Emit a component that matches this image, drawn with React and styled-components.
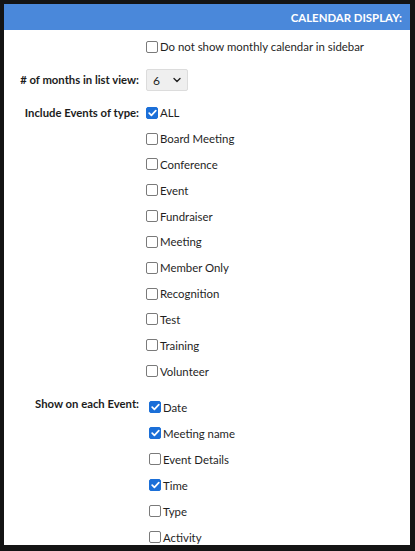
import React, { useState } from "react";
import styled, { createGlobalStyle } from "styled-components";

const GlobalStyle = createGlobalStyle`
  html, body {
    margin: 0;
    padding: 0;
    background: #ffffff;
  }
  body {
    font-family: Lato, "Open Sans", sans-serif;
    color: #222;
  }
`;

const Frame = styled.div`
  box-sizing: border-box;
  width: 415px;
  height: 551px;
  border-style: solid;
  border-color: #141414;
  border-width: 4px 5px 6px 4px;
  overflow: hidden;
  background: #fff;
`;

const Header = styled.header`
  height: 26px;
  background: #4a88da;
  color: #fff;
  display: flex;
  align-items: center;
  justify-content: flex-end;
  padding-right: 8px;
  font-size: 11.4px;
  font-weight: 700;
  text-transform: uppercase;
`;

const Form = styled.form`
  display: flex;
  flex-direction: column;
  gap: 9px;
  padding-top: 4px;
`;

const Row = styled.div`
  display: grid;
  grid-template-columns: 135px 1fr;
  column-gap: 7px;
  margin-top: ${(p) => p.$push || "0"};
  align-items: ${(p) => (p.$center ? "center" : "start")};
`;

const RowLabel = styled.label`
  text-align: right;
  font-size: 11.3px;
  font-weight: 700;
  line-height: ${(p) => p.$line || "26px"};
  color: #1c1c1c;
`;

const OptionList = styled.div`
  display: flex;
  flex-direction: column;
  padding-left: ${(p) => (p.$indent ? "3px" : "0")};
`;

const Option = styled.label`
  display: flex;
  align-items: center;
  height: ${(p) => p.$height || "25.8px"};
  font-size: 11.4px;
  color: #1f1f1f;
  cursor: pointer;
`;

const HiddenInput = styled.input`
  position: absolute;
  opacity: 0;
  width: 0;
  height: 0;
  margin: 0;
`;

const Box = styled.span`
  box-sizing: border-box;
  width: 12px;
  height: 12px;
  margin-right: 2px;
  border-radius: 2px;
  border: 1px solid ${(p) => (p.$checked ? "#1b6fd8" : "#7a7a7a")};
  background: ${(p) => (p.$checked ? "#1b6fd8" : "#fff")};
  display: flex;
  align-items: center;
  justify-content: center;
  flex-shrink: 0;
`;

const SelectWrap = styled.div`
  position: relative;
  width: 42px;
  height: 22px;
`;

const Select = styled.select`
  appearance: none;
  box-sizing: border-box;
  width: 100%;
  height: 100%;
  border: 1px solid #dcdcdc;
  border-radius: 2px;
  background: #efefef;
  font-family: Lato, sans-serif;
  font-size: 12px;
  color: #1f1f1f;
  padding: 0 0 0 6px;
`;

const Chevron = styled.svg`
  position: absolute;
  right: 7px;
  top: 8px;
  pointer-events: none;
`;

function Checkbox({ label, checked, onToggle, height }) {
  return (
    <Option $height={height}>
      <HiddenInput type="checkbox" checked={checked} onChange={onToggle} />
      <Box $checked={checked}>
        {checked && (
          <svg width="9" height="8" viewBox="0 0 9 8">
            <polyline
              points="1.2,4.2 3.4,6.3 7.8,1.6"
              fill="none"
              stroke="#fff"
              strokeWidth="1.7"
              strokeLinecap="round"
              strokeLinejoin="round"
            />
          </svg>
        )}
      </Box>
      {label}
    </Option>
  );
}

const eventTypes = [
  "ALL",
  "Board Meeting",
  "Conference",
  "Event",
  "Fundraiser",
  "Meeting",
  "Member Only",
  "Recognition",
  "Test",
  "Training",
  "Volunteer",
];

const showFields = [
  "Date",
  "Meeting name",
  "Event Details",
  "Time",
  "Type",
  "Activity",
];

export default function App() {
  const [hideCalendar, setHideCalendar] = useState(false);
  const [months, setMonths] = useState("6");
  const [types, setTypes] = useState({ ALL: true });
  const [fields, setFields] = useState({
    Date: true,
    "Meeting name": true,
    Time: true,
  });

  const toggleType = (name) => setTypes((t) => ({ ...t, [name]: !t[name] }));
  const toggleField = (name) => setFields((f) => ({ ...f, [name]: !f[name] }));

  return (
    <>
      <GlobalStyle />
      <Frame>
        <Header>Calendar Display:</Header>
        <Form onSubmit={(e) => e.preventDefault()}>
          <Row>
            <span />
            <OptionList>
              <Checkbox
                label="Do not show monthly calendar in sidebar"
                checked={hideCalendar}
                onToggle={() => setHideCalendar(!hideCalendar)}
              />
            </OptionList>
          </Row>
          <Row $center>
            <RowLabel htmlFor="months" $line="22px">
              # of months in list view:
            </RowLabel>
            <SelectWrap>
              <Select
                id="months"
                value={months}
                onChange={(e) => setMonths(e.target.value)}>
                {["1", "2", "3", "4", "5", "6", "9", "12"].map((m) => (
                  <option key={m} value={m}>
                    {m}
                  </option>
                ))}
              </Select>
              <Chevron width="8" height="6" viewBox="0 0 8 6">
                <polyline
                  points="1,1.5 4,4.5 7,1.5"
                  fill="none"
                  stroke="#222"
                  strokeWidth="1.4"
                  strokeLinecap="round"
                  strokeLinejoin="round"
                />
              </Chevron>
            </SelectWrap>
          </Row>
          <Row>
            <RowLabel>Include Events of type:</RowLabel>
            <OptionList>
              {eventTypes.map((t) => (
                <Checkbox
                  key={t}
                  label={t}
                  height="25.85px"
                  checked={!!types[t]}
                  onToggle={() => toggleType(t)}
                />
              ))}
            </OptionList>
          </Row>
          <Row $push="1px">
            <RowLabel $line="20px">Show on each Event:</RowLabel>
            <OptionList $indent>
              {showFields.map((f) => (
                <Checkbox
                  key={f}
                  label={f}
                  height="26px"
                  checked={!!fields[f]}
                  onToggle={() => toggleField(f)}
                />
              ))}
            </OptionList>
          </Row>
        </Form>
      </Frame>
    </>
  );
}
